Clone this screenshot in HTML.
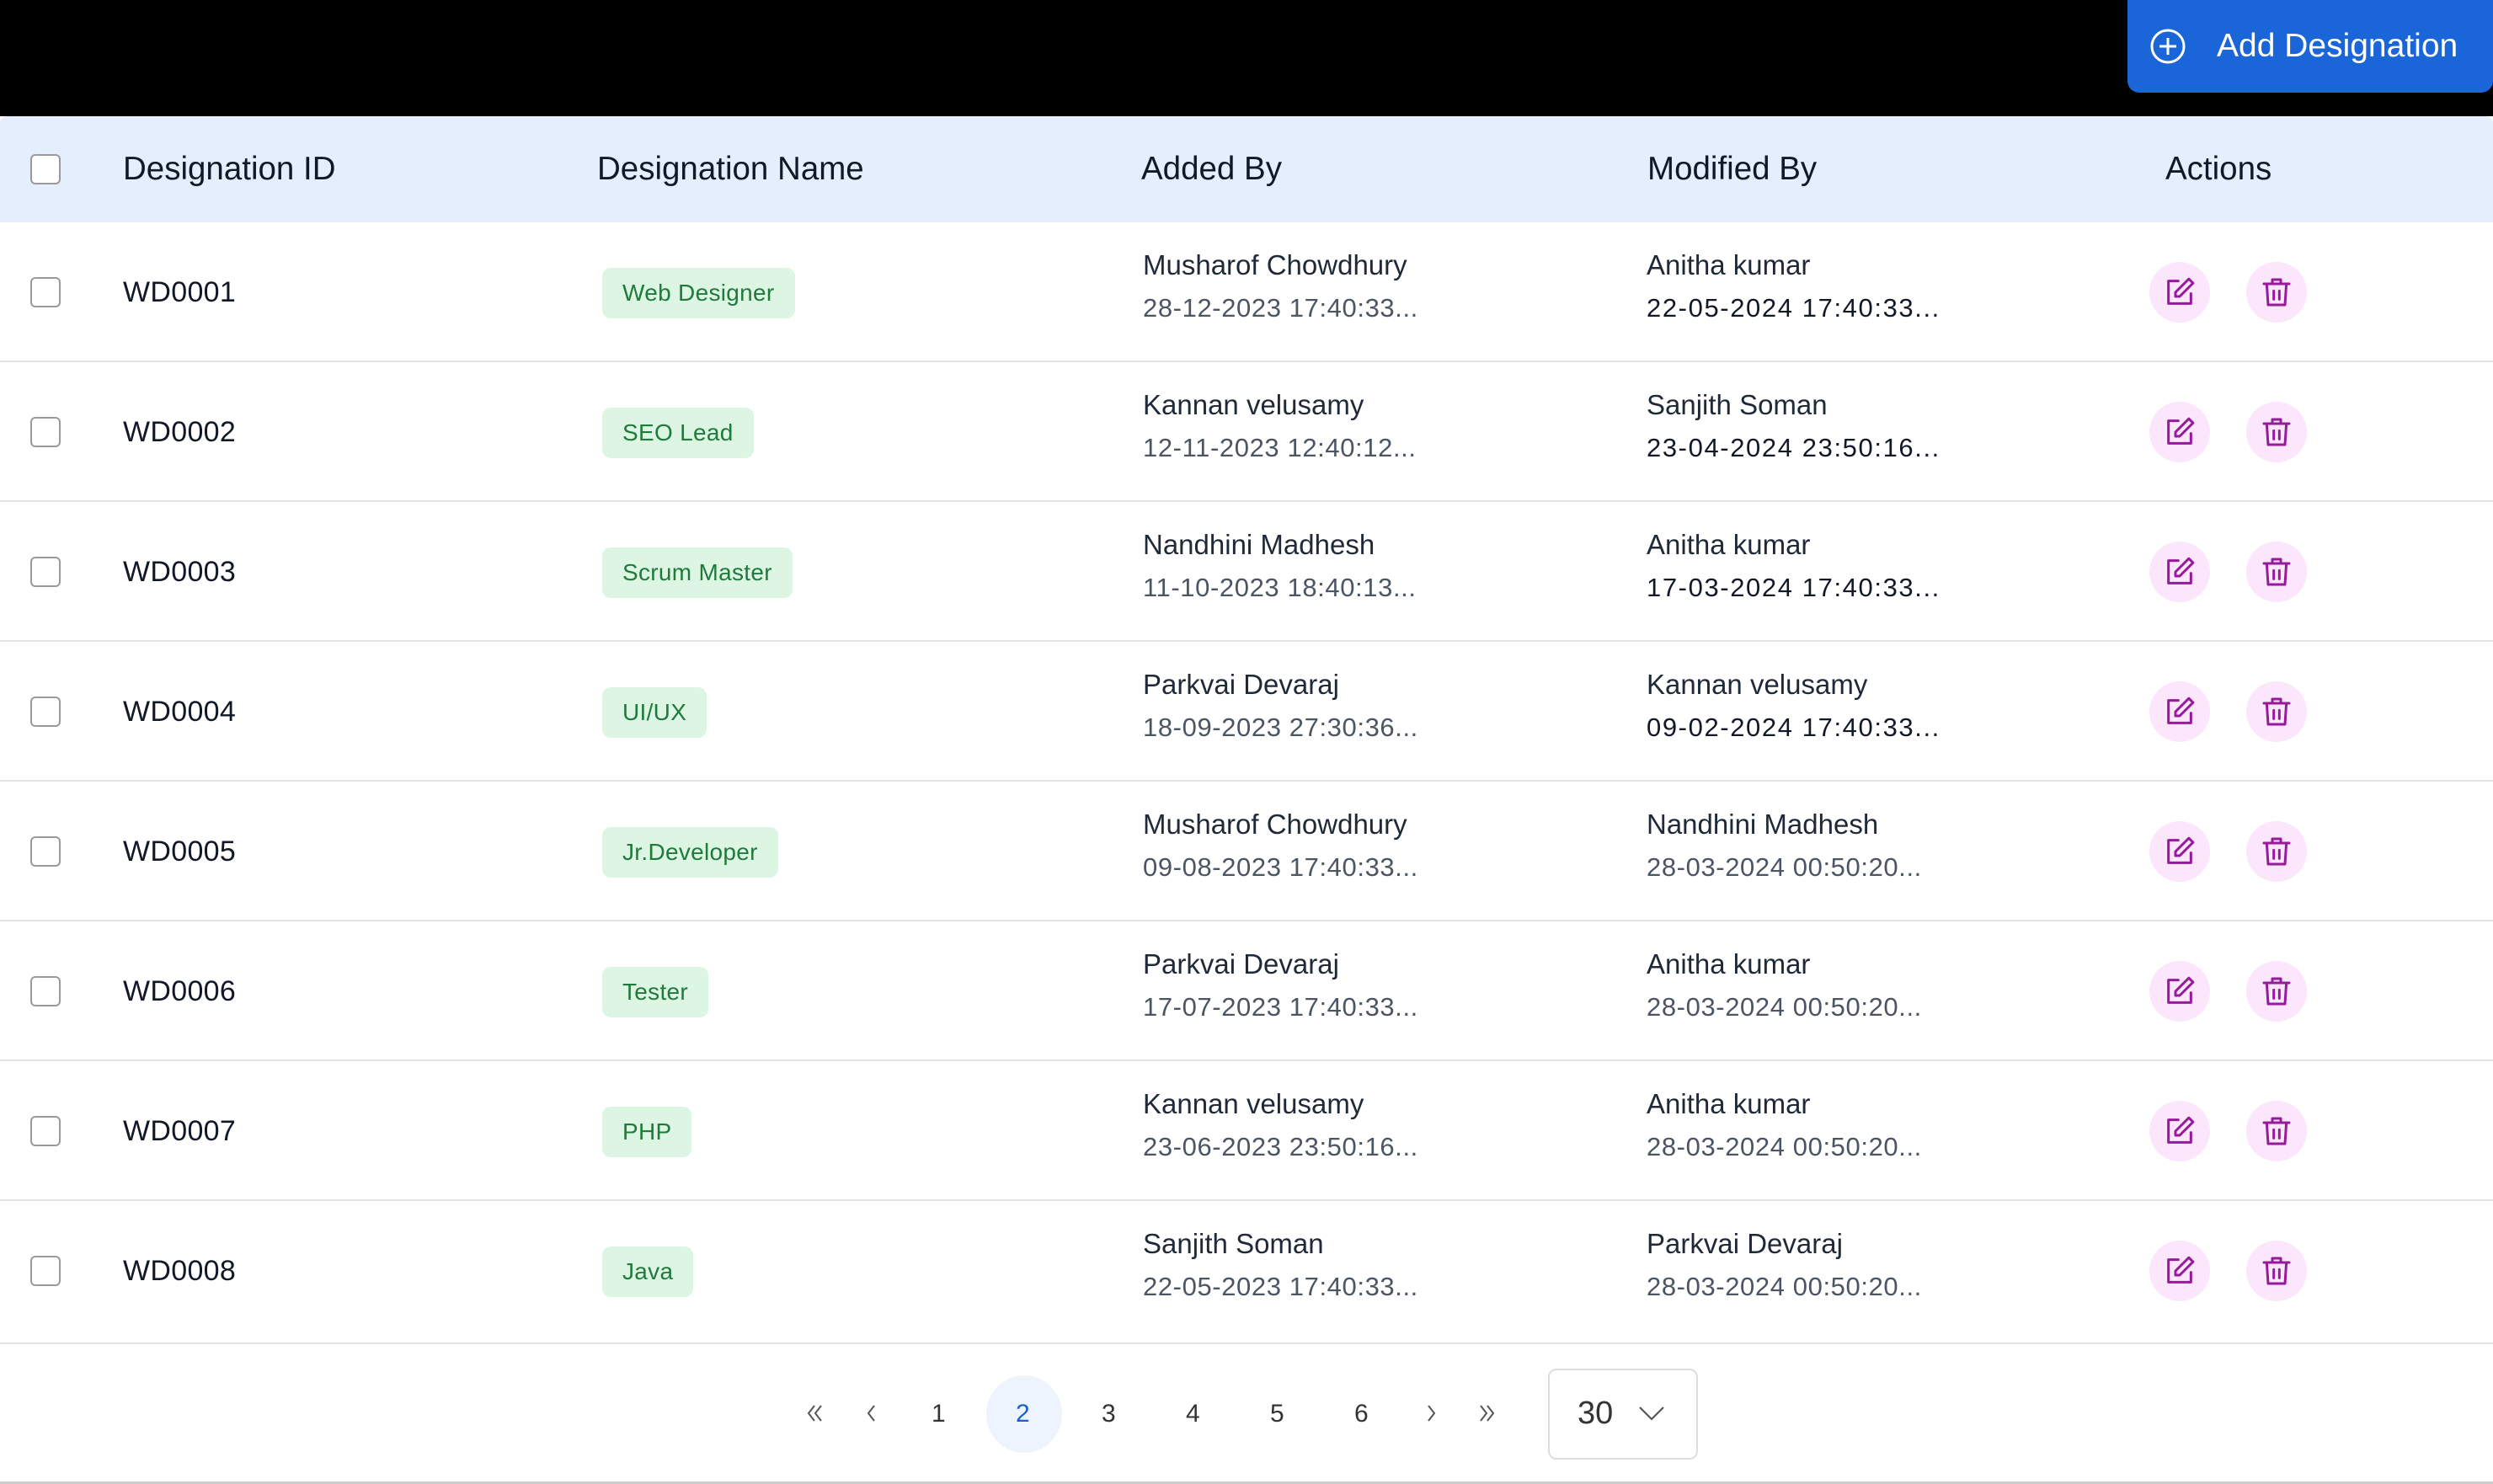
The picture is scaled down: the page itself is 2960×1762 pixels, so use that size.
<!DOCTYPE html>
<html><head><meta charset="utf-8"><style>
*{margin:0;padding:0;box-sizing:border-box}
body{width:2960px;height:1762px;background:#fff;font-family:"Liberation Sans",sans-serif;color:#111827;position:relative;overflow:hidden}
.top{position:absolute;left:0;top:0;width:2960px;height:138px;background:#000}
.btn{position:absolute;left:2526px;top:0;width:434px;height:110px;background:#1a66d9;border-radius:0 0 14px 14px;color:#fff;font-size:39px;display:flex;align-items:center}
.head{position:absolute;left:0;top:138px;width:2960px;height:126px;background:#e4eefd;border-radius:8px 8px 0 0}
.ht{position:absolute;top:179px;font-size:38.5px;color:#111827}
.cb{position:absolute;left:36px;width:36px;height:36px;border:2.5px solid #9a9a9a;border-radius:6px;background:#fff}
.row{position:absolute;left:0;width:2960px;height:166px;border-bottom:2px solid #e3e3e3}
.id{position:absolute;left:146px;top:64px;font-size:34px;letter-spacing:0.3px}
.badge{position:absolute;left:715px;top:54px;height:60px;padding:0 24px;background:#dcf6e3;color:#1f7a3c;border-radius:10px;font-size:28px;line-height:60px;letter-spacing:0.3px}
.n{position:absolute;top:32px;font-size:33px;color:#1f2937}
.d{position:absolute;top:84px;font-size:31px;color:#4b5563;letter-spacing:0.6px}
.d.dk{color:#111827;letter-spacing:1.6px}
.ic{position:absolute;top:47px;width:72px;height:72px;border-radius:50%;background:#fbe6fb;display:flex;align-items:center;justify-content:center}
.pg{position:absolute;top:1662px;font-size:30px;color:#333}
</style></head><body>
<div class="top"></div>
<div class="btn"><svg style="position:absolute;left:26px" width="44" height="44" viewBox="0 0 44 44"><circle cx="22" cy="22" r="19" fill="none" stroke="#fff" stroke-width="3"/><path d="M22 12v20M12 22h20" stroke="#fff" stroke-width="3"/></svg><span style="position:absolute;left:106px">Add Designation</span></div>
<div class="head"></div>
<div class="cb" style="top:183px"></div>
<div class="ht" style="left:146px">Designation ID</div>
<div class="ht" style="left:709px">Designation Name</div>
<div class="ht" style="left:1355px">Added By</div>
<div class="ht" style="left:1956px">Modified By</div>
<div class="ht" style="left:2571px">Actions</div>

<div class="row" style="top:264px"><div class="cb" style="top:65px"></div><div class="id">WD0001</div><div class="badge">Web Designer</div><div class="n" style="left:1357px">Musharof Chowdhury</div><div class="d" style="left:1357px">28-12-2023 17:40:33...</div><div class="n" style="left:1955px">Anitha kumar</div><div class="d dk" style="left:1955px">22-05-2024 17:40:33...</div>
<div class="ic" style="left:2552px"><svg width="40" height="40" viewBox="0 0 24 24" fill="none" stroke="#971a9c" stroke-width="1.8" stroke-linecap="round" stroke-linejoin="round"><path d="M11 4H4v16h16v-7"/><path d="M18.5 2.5l3 3L12 15H9v-3z"/></svg></div>
<div class="ic" style="left:2667px"><svg width="40" height="40" viewBox="0 0 24 24" fill="none" stroke="#971a9c" stroke-width="1.8" stroke-linecap="round" stroke-linejoin="round"><path d="M3 6h18M9 6V3h6v3M5 6l1 15h12l1-15M10 11v6M14 11v6"/></svg></div></div>
<div class="row" style="top:430px"><div class="cb" style="top:65px"></div><div class="id">WD0002</div><div class="badge">SEO Lead</div><div class="n" style="left:1357px">Kannan velusamy</div><div class="d" style="left:1357px">12-11-2023 12:40:12...</div><div class="n" style="left:1955px">Sanjith Soman</div><div class="d dk" style="left:1955px">23-04-2024 23:50:16...</div>
<div class="ic" style="left:2552px"><svg width="40" height="40" viewBox="0 0 24 24" fill="none" stroke="#971a9c" stroke-width="1.8" stroke-linecap="round" stroke-linejoin="round"><path d="M11 4H4v16h16v-7"/><path d="M18.5 2.5l3 3L12 15H9v-3z"/></svg></div>
<div class="ic" style="left:2667px"><svg width="40" height="40" viewBox="0 0 24 24" fill="none" stroke="#971a9c" stroke-width="1.8" stroke-linecap="round" stroke-linejoin="round"><path d="M3 6h18M9 6V3h6v3M5 6l1 15h12l1-15M10 11v6M14 11v6"/></svg></div></div>
<div class="row" style="top:596px"><div class="cb" style="top:65px"></div><div class="id">WD0003</div><div class="badge">Scrum Master</div><div class="n" style="left:1357px">Nandhini Madhesh</div><div class="d" style="left:1357px">11-10-2023 18:40:13...</div><div class="n" style="left:1955px">Anitha kumar</div><div class="d dk" style="left:1955px">17-03-2024 17:40:33...</div>
<div class="ic" style="left:2552px"><svg width="40" height="40" viewBox="0 0 24 24" fill="none" stroke="#971a9c" stroke-width="1.8" stroke-linecap="round" stroke-linejoin="round"><path d="M11 4H4v16h16v-7"/><path d="M18.5 2.5l3 3L12 15H9v-3z"/></svg></div>
<div class="ic" style="left:2667px"><svg width="40" height="40" viewBox="0 0 24 24" fill="none" stroke="#971a9c" stroke-width="1.8" stroke-linecap="round" stroke-linejoin="round"><path d="M3 6h18M9 6V3h6v3M5 6l1 15h12l1-15M10 11v6M14 11v6"/></svg></div></div>
<div class="row" style="top:762px"><div class="cb" style="top:65px"></div><div class="id">WD0004</div><div class="badge">UI/UX</div><div class="n" style="left:1357px">Parkvai Devaraj</div><div class="d" style="left:1357px">18-09-2023 27:30:36...</div><div class="n" style="left:1955px">Kannan velusamy</div><div class="d dk" style="left:1955px">09-02-2024 17:40:33...</div>
<div class="ic" style="left:2552px"><svg width="40" height="40" viewBox="0 0 24 24" fill="none" stroke="#971a9c" stroke-width="1.8" stroke-linecap="round" stroke-linejoin="round"><path d="M11 4H4v16h16v-7"/><path d="M18.5 2.5l3 3L12 15H9v-3z"/></svg></div>
<div class="ic" style="left:2667px"><svg width="40" height="40" viewBox="0 0 24 24" fill="none" stroke="#971a9c" stroke-width="1.8" stroke-linecap="round" stroke-linejoin="round"><path d="M3 6h18M9 6V3h6v3M5 6l1 15h12l1-15M10 11v6M14 11v6"/></svg></div></div>
<div class="row" style="top:928px"><div class="cb" style="top:65px"></div><div class="id">WD0005</div><div class="badge">Jr.Developer</div><div class="n" style="left:1357px">Musharof Chowdhury</div><div class="d" style="left:1357px">09-08-2023 17:40:33...</div><div class="n" style="left:1955px">Nandhini Madhesh</div><div class="d" style="left:1955px">28-03-2024 00:50:20...</div>
<div class="ic" style="left:2552px"><svg width="40" height="40" viewBox="0 0 24 24" fill="none" stroke="#971a9c" stroke-width="1.8" stroke-linecap="round" stroke-linejoin="round"><path d="M11 4H4v16h16v-7"/><path d="M18.5 2.5l3 3L12 15H9v-3z"/></svg></div>
<div class="ic" style="left:2667px"><svg width="40" height="40" viewBox="0 0 24 24" fill="none" stroke="#971a9c" stroke-width="1.8" stroke-linecap="round" stroke-linejoin="round"><path d="M3 6h18M9 6V3h6v3M5 6l1 15h12l1-15M10 11v6M14 11v6"/></svg></div></div>
<div class="row" style="top:1094px"><div class="cb" style="top:65px"></div><div class="id">WD0006</div><div class="badge">Tester</div><div class="n" style="left:1357px">Parkvai Devaraj</div><div class="d" style="left:1357px">17-07-2023 17:40:33...</div><div class="n" style="left:1955px">Anitha kumar</div><div class="d" style="left:1955px">28-03-2024 00:50:20...</div>
<div class="ic" style="left:2552px"><svg width="40" height="40" viewBox="0 0 24 24" fill="none" stroke="#971a9c" stroke-width="1.8" stroke-linecap="round" stroke-linejoin="round"><path d="M11 4H4v16h16v-7"/><path d="M18.5 2.5l3 3L12 15H9v-3z"/></svg></div>
<div class="ic" style="left:2667px"><svg width="40" height="40" viewBox="0 0 24 24" fill="none" stroke="#971a9c" stroke-width="1.8" stroke-linecap="round" stroke-linejoin="round"><path d="M3 6h18M9 6V3h6v3M5 6l1 15h12l1-15M10 11v6M14 11v6"/></svg></div></div>
<div class="row" style="top:1260px"><div class="cb" style="top:65px"></div><div class="id">WD0007</div><div class="badge">PHP</div><div class="n" style="left:1357px">Kannan velusamy</div><div class="d" style="left:1357px">23-06-2023 23:50:16...</div><div class="n" style="left:1955px">Anitha kumar</div><div class="d" style="left:1955px">28-03-2024 00:50:20...</div>
<div class="ic" style="left:2552px"><svg width="40" height="40" viewBox="0 0 24 24" fill="none" stroke="#971a9c" stroke-width="1.8" stroke-linecap="round" stroke-linejoin="round"><path d="M11 4H4v16h16v-7"/><path d="M18.5 2.5l3 3L12 15H9v-3z"/></svg></div>
<div class="ic" style="left:2667px"><svg width="40" height="40" viewBox="0 0 24 24" fill="none" stroke="#971a9c" stroke-width="1.8" stroke-linecap="round" stroke-linejoin="round"><path d="M3 6h18M9 6V3h6v3M5 6l1 15h12l1-15M10 11v6M14 11v6"/></svg></div></div>
<div class="row" style="top:1426px;height:170px"><div class="cb" style="top:65px"></div><div class="id">WD0008</div><div class="badge">Java</div><div class="n" style="left:1357px">Sanjith Soman</div><div class="d" style="left:1357px">22-05-2023 17:40:33...</div><div class="n" style="left:1955px">Parkvai Devaraj</div><div class="d" style="left:1955px">28-03-2024 00:50:20...</div>
<div class="ic" style="left:2552px"><svg width="40" height="40" viewBox="0 0 24 24" fill="none" stroke="#971a9c" stroke-width="1.8" stroke-linecap="round" stroke-linejoin="round"><path d="M11 4H4v16h16v-7"/><path d="M18.5 2.5l3 3L12 15H9v-3z"/></svg></div>
<div class="ic" style="left:2667px"><svg width="40" height="40" viewBox="0 0 24 24" fill="none" stroke="#971a9c" stroke-width="1.8" stroke-linecap="round" stroke-linejoin="round"><path d="M3 6h18M9 6V3h6v3M5 6l1 15h12l1-15M10 11v6M14 11v6"/></svg></div></div>

<div style="position:absolute;left:1171px;top:1633px;width:90px;height:92px;border-radius:50%;background:#edf4fe"></div>
<svg style="position:absolute;left:956px;top:1666px" width="28" height="24" viewBox="0 0 28 24" fill="none" stroke="#555" stroke-width="2"><path d="M11 3l-7 9 7 9M19 3l-7 9 7 9"/></svg>
<svg style="position:absolute;left:1026px;top:1666px" width="18" height="24" viewBox="0 0 18 24" fill="none" stroke="#555" stroke-width="2"><path d="M12 3l-7 9 7 9"/></svg>
<div class="pg" style="left:1106px">1</div>
<div class="pg" style="left:1206px;color:#1a5fc9">2</div>
<div class="pg" style="left:1308px">3</div>
<div class="pg" style="left:1408px">4</div>
<div class="pg" style="left:1508px">5</div>
<div class="pg" style="left:1608px">6</div>
<svg style="position:absolute;left:1690px;top:1666px" width="18" height="24" viewBox="0 0 18 24" fill="none" stroke="#555" stroke-width="2"><path d="M6 3l7 9-7 9"/></svg>
<svg style="position:absolute;left:1749px;top:1666px" width="28" height="24" viewBox="0 0 28 24" fill="none" stroke="#555" stroke-width="2"><path d="M9 3l7 9-7 9M17 3l7 9-7 9"/></svg>
<div style="position:absolute;left:1838px;top:1625px;width:178px;height:108px;border:2px solid #ddd;border-radius:10px"></div>
<div style="position:absolute;left:1873px;top:1657px;font-size:38px;color:#333">30</div>
<svg style="position:absolute;left:1944px;top:1667px" width="34" height="22" viewBox="0 0 34 22" fill="none" stroke="#555" stroke-width="2.2"><path d="M3 4l14 14 14-14"/></svg>
<div style="position:absolute;left:0;top:1759px;width:2960px;height:3px;background:#ccc"></div>
</body></html>
